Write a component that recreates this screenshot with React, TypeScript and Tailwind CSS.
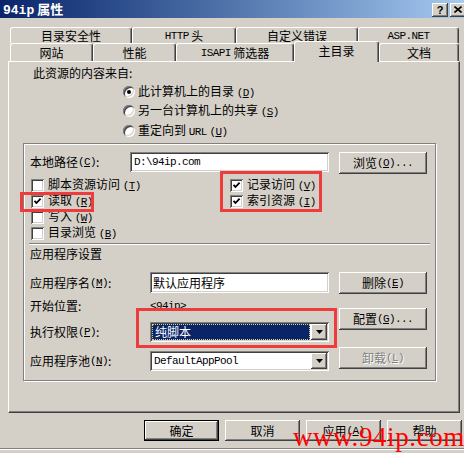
import type { ReactNode } from 'react'

const mono = "font-['Liberation_Mono',monospace] text-[11px] tracking-[-0.6px]"
const raised =
  'bg-[#d4d0c8] shadow-[inset_-1px_-1px_0_#404040,inset_1px_1px_0_#ffffff,inset_-2px_-2px_0_#808080,inset_2px_2px_0_#d4d0c8]'
const sunken =
  'bg-white shadow-[inset_1px_1px_0_#808080,inset_-1px_-1px_0_#ffffff,inset_2px_2px_0_#404040,inset_-2px_-2px_0_#d4d0c8]'
const tab =
  'flex items-center justify-center h-full border-t border-l border-r border-t-white border-l-white border-r-[#404040] shadow-[inset_-1px_0_0_#808080] rounded-t-[3px] bg-[#d4d0c8]'

function Acc({ k, dots }: { k: string; dots?: boolean }) {
  return (
    <span className={mono}>
      (<span className="underline">{k}</span>){dots ? '...' : ''}
    </span>
  )
}

function Btn({ children, w = 'w-[88px]', h = 'h-[22px]', disabled, className = '' }: { children: ReactNode; w?: string; h?: string; disabled?: boolean; className?: string }) {
  return (
    <div
      className={`${w} ${h} ${raised} flex items-center justify-center ${disabled ? 'text-[#808080] [text-shadow:1px_1px_0_#ffffff]' : ''} ${className}`}
    >
      {children}
    </div>
  )
}

function Radio({ on }: { on?: boolean }) {
  return (
    <div className={`w-[12px] h-[12px] rounded-full ${sunken} flex items-center justify-center shrink-0`}>
      {on && <div className="w-[4px] h-[4px] rounded-full bg-black" />}
    </div>
  )
}

function Check({ on }: { on?: boolean }) {
  return (
    <div className={`w-[13px] h-[13px] ${sunken} flex items-center justify-center shrink-0`}>
      {on && (
        <svg width="9" height="9" viewBox="0 0 9 9">
          <polyline points="1.5,3.8 3.5,6 7.6,1.6" fill="none" stroke="black" strokeWidth="1.8" />
        </svg>
      )}
    </div>
  )
}

function Arrow() {
  return (
    <div className={`w-[16px] h-[16px] ${raised} flex items-center justify-center shrink-0`}>
      <svg width="7" height="4" viewBox="0 0 7 4">
        <polygon points="0,0 7,0 3.5,4" fill="black" />
      </svg>
    </div>
  )
}

function Select({ children, focused }: { children: ReactNode; focused?: boolean }) {
  return (
    <div className={`w-[179px] h-[20px] ${sunken} flex items-center p-[2px]`}>
      <div
        className={`flex-1 h-full flex items-center pl-[2px] mr-[1px] ${
          focused ? 'bg-[#0a246a] text-white border border-dotted border-[#d8d880]' : ''
        }`}
      >
        {children}
      </div>
      <Arrow />
    </div>
  )
}

export default function App() {
  return (
    <div className="relative w-[464px] h-[453px] overflow-hidden bg-[#d4d0c8] text-black text-[12px] leading-[16px] font-['Noto_Sans_CJK_SC','Noto_Sans',sans-serif]">
      {/* title bar */}
      <div className="h-[18px] flex items-center pl-[3px] bg-linear-to-r from-[#0a246a] to-[#a6caf0]">
        <span className="text-white font-bold text-[13px] leading-[17px]">
          <span className="font-['Liberation_Mono',monospace]">94ip</span> 属性
        </span>
        <div className="ml-auto flex gap-[2px] -mr-[2px] pt-[1px]">
          <div className={`w-[16px] h-[14px] ${raised} flex items-center justify-center font-bold text-[11px] leading-[14px] font-['Liberation_Sans',sans-serif]`}>?</div>
          <div className={`w-[16px] h-[14px] ${raised} flex items-center justify-center`}>
            <svg width="8" height="7" viewBox="0 0 8 7">
              <path d="M0.5 0.5 L7.5 6.5 M7.5 0.5 L0.5 6.5" stroke="black" strokeWidth="1.6" />
            </svg>
          </div>
        </div>
      </div>

      {/* tabs */}
      <div className="mt-[9px] pl-[10px] flex h-[16px]">
        <div className={`${tab} w-[122px]`}>目录安全性</div>
        <div className={`${tab} w-[104px]`}>
          <span className={mono}>HTTP</span>&nbsp;头
        </div>
        <div className={`${tab} w-[122px]`}>自定义错误</div>
        <div className={`${tab} w-[101px]`}>
          <span className={mono}>ASP.NET</span>
        </div>
      </div>
      <div className="pl-[10px] flex items-start h-[18px]">
        <div className={`${tab} w-[83px]`}>网站</div>
        <div className={`${tab} w-[83px]`}>性能</div>
        <div className={`${tab} w-[118px]`}>
          <span className={mono}>ISAPI</span>&nbsp;筛选器
        </div>
        <div className={`${tab} w-[85px] !h-[21px] -mt-[2px] relative z-10 pb-[3px]`}>主目录</div>
        <div className={`${tab} w-[80px]`}>文档</div>
      </div>

      {/* tab page */}
      <div className="ml-[8px] w-[452px] h-[352px] border border-t-white border-l-white border-r-[#404040] border-b-[#404040] shadow-[inset_-1px_-1px_0_#808080]">
        <div className="mt-[3px] h-[16px] pl-[24px]">此资源的内容来自:</div>
        <div className="ml-[114px] flex flex-col">
          <div className="mt-[3px] h-[16px] flex items-center gap-[3px]">
            <Radio on />
            <span>
              此计算机上的目录 <Acc k="D" />
            </span>
          </div>
          <div className="mt-[3px] h-[16px] flex items-center gap-[3px]">
            <Radio />
            <span>
              另一台计算机上的共享 <Acc k="S" />
            </span>
          </div>
          <div className="mt-[4px] h-[16px] flex items-center gap-[3px]">
            <Radio />
            <span>
              重定向到 <span className={mono}>URL</span> <Acc k="U" />
            </span>
          </div>
        </div>

        {/* group box */}
        <div className="mt-[4px] ml-[14px] w-[413px] h-[238px] border border-[#808080] shadow-[inset_1px_1px_0_#ffffff,1px_1px_0_#ffffff]">
          <div className="mt-[8px] pl-[6px] flex items-start">
            <div className="w-[100px] h-[20px] flex items-center">
              本地路径<Acc k="C" />:
            </div>
            <div className={`w-[199px] h-[20px] ${sunken} flex items-center pl-[4px]`}>
              <span className={mono}>D:\94ip.com</span>
            </div>
            <Btn className="ml-[10px]">
              浏览<Acc k="O" dots />
            </Btn>
          </div>

          <div className="mt-[3px] pl-[7px] flex">
            <div className="w-[199px] flex flex-col">
              {[
                ['脚本资源访问', 'T', false],
                ['读取', 'R', true],
                ['写入', 'W', false],
                ['目录浏览', 'B', false],
              ].map(([label, k, on]) => (
                <div key={label as string} className="h-[16px] flex items-center gap-[4px]">
                  <Check on={on as boolean} />
                  <span>
                    {label} <Acc k={k as string} />
                  </span>
                </div>
              ))}
            </div>
            <div className="flex flex-col">
              <div className="h-[16px] flex items-center gap-[4px]">
                <Check on />
                <span>
                  记录访问 <Acc k="V" />
                </span>
              </div>
              <div className="h-[16px] flex items-center gap-[4px]">
                <Check on />
                <span>
                  索引资源 <Acc k="I" />
                </span>
              </div>
            </div>
          </div>

          <div className="mt-[2px] ml-[5px] w-[401px] h-[2px] border-t border-t-[#808080] border-b border-b-white" />
          <div className="mt-[1px] h-[16px] pl-[6px]">应用程序设置</div>

          <div className="mt-[10px] pl-[6px] flex items-start">
            <div className="w-[299px] flex flex-col">
              <div className="flex h-[21px]">
                <div className="w-[120px] flex items-center">
                  应用程序名<Acc k="M" />:
                </div>
                <div className={`w-[179px] h-[21px] ${sunken} flex items-center pl-[3px]`}>默认应用程序</div>
              </div>
              <div className="mt-[5px] flex h-[16px] items-center">
                <div className="w-[120px]">开始位置:</div>
                <span className={mono}>&lt;94ip&gt;</span>
              </div>
              <div className="mt-[8px] flex h-[20px]">
                <div className="w-[120px] flex items-center">
                  执行权限<Acc k="P" />:
                </div>
                <Select focused>纯脚本</Select>
              </div>
              <div className="mt-[9px] flex h-[20px]">
                <div className="w-[120px] flex items-center">
                  应用程序池<Acc k="N" />:
                </div>
                <Select>
                  <span className={mono}>DefaultAppPool</span>
                </Select>
              </div>
            </div>
            <div className="ml-[10px] flex flex-col">
              <Btn>
                删除<Acc k="E" />
              </Btn>
              <Btn className="mt-[14px]">
                配置<Acc k="G" dots />
              </Btn>
              <Btn className="mt-[17px]" disabled>
                卸载<Acc k="L" />
              </Btn>
            </div>
          </div>
        </div>
      </div>

      {/* dialog buttons */}
      <div className="mt-[7px] pr-[2px] flex justify-end gap-[6px]">
        <div className="w-[75px] h-[21px] border border-black">
          <Btn w="w-full" h="h-full">确定</Btn>
        </div>
        <Btn w="w-[75px]" h="h-[21px]">取消</Btn>
        <Btn w="w-[75px]" h="h-[21px]">
          应用<Acc k="A" />
        </Btn>
        <Btn w="w-[75px]" h="h-[21px]">帮助</Btn>
      </div>
      <div className="mt-[7px] h-[2px] border-t border-t-[#808080] border-b border-b-white" />

      {/* red annotation boxes */}
      <div className="absolute left-[20px] top-[192px] w-[74px] h-[20px] border-[3px] border-[#ee3b3b]" />
      <div className="absolute left-[220px] top-[171px] w-[102px] h-[41px] border-[3px] border-[#ee3b3b]" />
      <div className="absolute left-[136px] top-[308px] w-[201px] h-[40px] border-[3px] border-[#ee3b3b]" />

      {/* watermark */}
      <div className="absolute left-[293px] top-[422px] text-[27px] leading-[30px] tracking-[0.6px] text-[#ff0000] font-['Liberation_Serif',serif]">
        www.94ip.com
      </div>
    </div>
  )
}
